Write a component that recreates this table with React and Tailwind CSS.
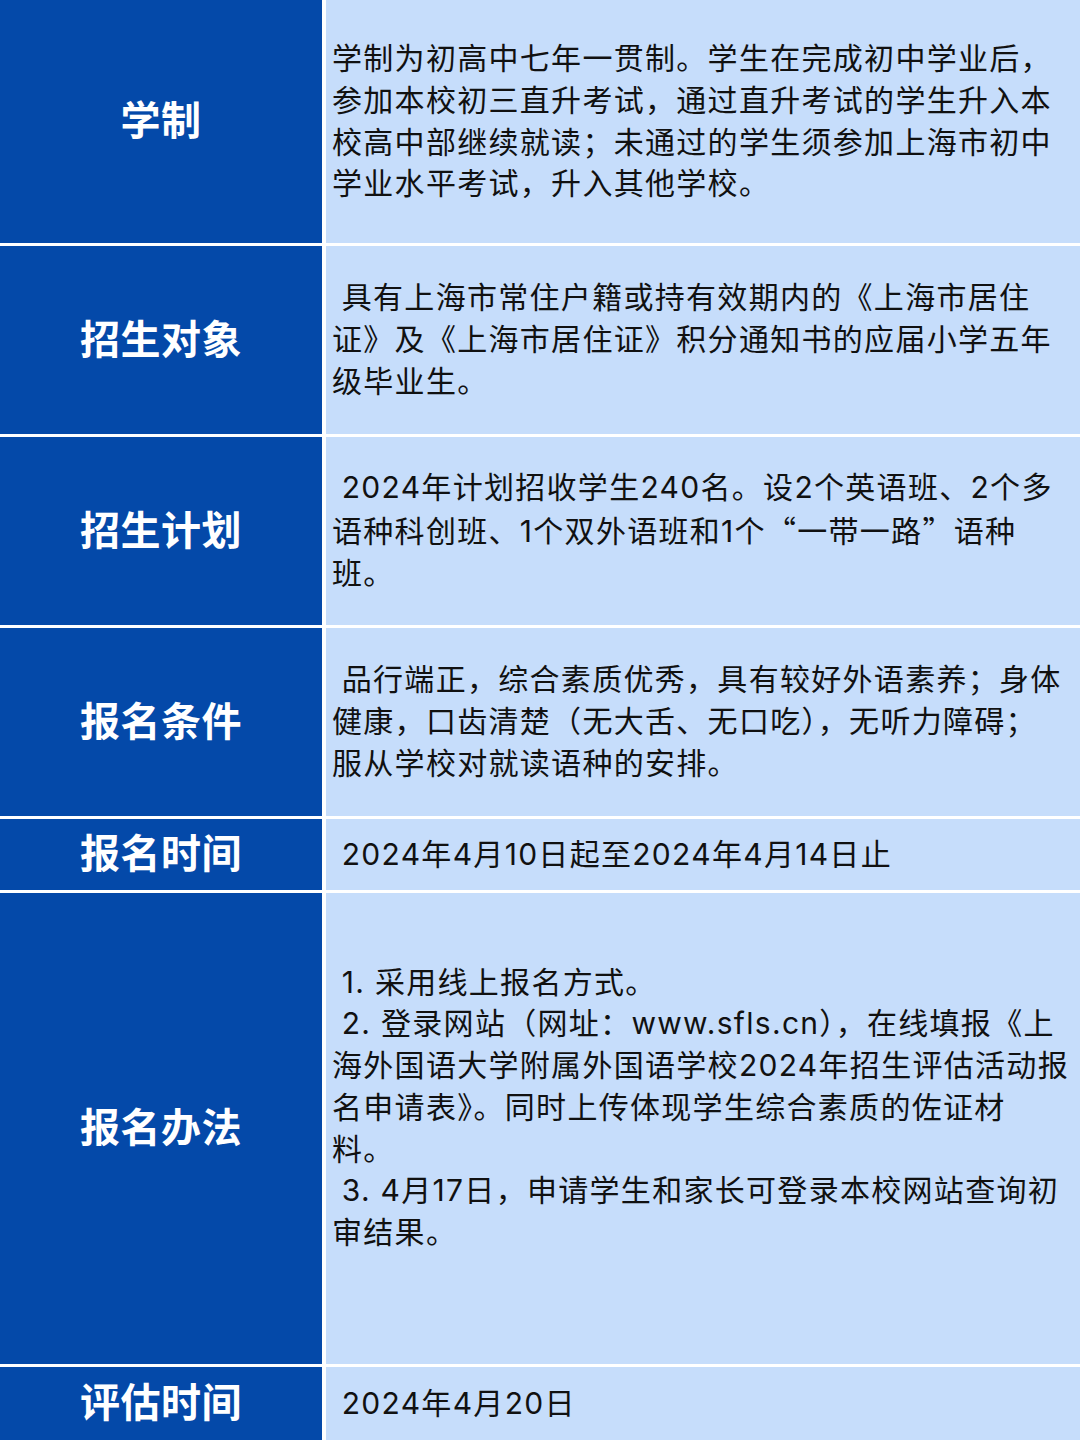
import React from "react";

const rows = [
  {
    label: "学制",
    height: "h-[243px]",
    lines: [
      "学制为初高中七年一贯制。学生在完成初中学业后，",
      "参加本校初三直升考试，通过直升考试的学生升入本",
      "校高中部继续就读；未通过的学生须参加上海市初中",
      "学业水平考试，升入其他学校。",
    ],
  },
  {
    label: "招生对象",
    height: "h-[188px]",
    lines: [
      " 具有上海市常住户籍或持有效期内的《上海市居住",
      "证》及《上海市居住证》积分通知书的应届小学五年",
      "级毕业生。",
    ],
  },
  {
    label: "招生计划",
    height: "h-[188px]",
    lines: [
      " 2024年计划招收学生240名。设2个英语班、2个多",
      <>
        语种科创班、1个双外语班和1个
        <span className="font-['Noto_Sans_CJK_SC']">“</span>一带一路
        <span className="font-['Noto_Sans_CJK_SC']">”</span>语种
      </>,
      "班。",
    ],
  },
  {
    label: "报名条件",
    height: "h-[188px]",
    lines: [
      " 品行端正，综合素质优秀，具有较好外语素养；身体",
      "健康，口齿清楚（无大舌、无口吃），无听力障碍；",
      "服从学校对就读语种的安排。",
    ],
  },
  {
    label: "报名时间",
    height: "h-[71px]",
    lines: [" 2024年4月10日起至2024年4月14日止"],
  },
  {
    label: "报名办法",
    height: "h-[471px]",
    lines: [
      " 1. 采用线上报名方式。",
      " 2. 登录网站（网址：www.sfls.cn），在线填报《上",
      "海外国语大学附属外国语学校2024年招生评估活动报",
      "名申请表》。同时上传体现学生综合素质的佐证材",
      "料。",
      " 3. 4月17日，申请学生和家长可登录本校网站查询初",
      "审结果。",
      " ",
    ],
  },
  {
    label: "评估时间",
    height: "flex-1",
    lines: [" 2024年4月20日"],
  },
];

export default function App() {
  return (
    <div className="w-[1080px] h-[1440px] overflow-hidden bg-white flex flex-col gap-[3px] font-['Inter','Noto_Sans_CJK_SC',sans-serif]">
      {rows.map((row) => (
        <div key={row.label} className={`flex gap-[4px] ${row.height}`}>
          <div className="w-[322px] shrink-0 bg-[#0449a9] flex items-center justify-center pb-[7px]">
            <span className="text-white text-[40px] font-bold tracking-[0.5px] font-['Noto_Sans_CJK_SC',sans-serif]">
              {row.label}
            </span>
          </div>
          <div className="flex-1 bg-[#c6ddfb] flex flex-col justify-center pl-[6px] pr-[4px]">
            {row.lines.map((line, i) => (
              <div
                key={i}
                className="whitespace-pre text-[30px] leading-[41.7px] tracking-[1.3px] text-[#111111]"
              >
                {line}
              </div>
            ))}
          </div>
        </div>
      ))}
    </div>
  );
}
